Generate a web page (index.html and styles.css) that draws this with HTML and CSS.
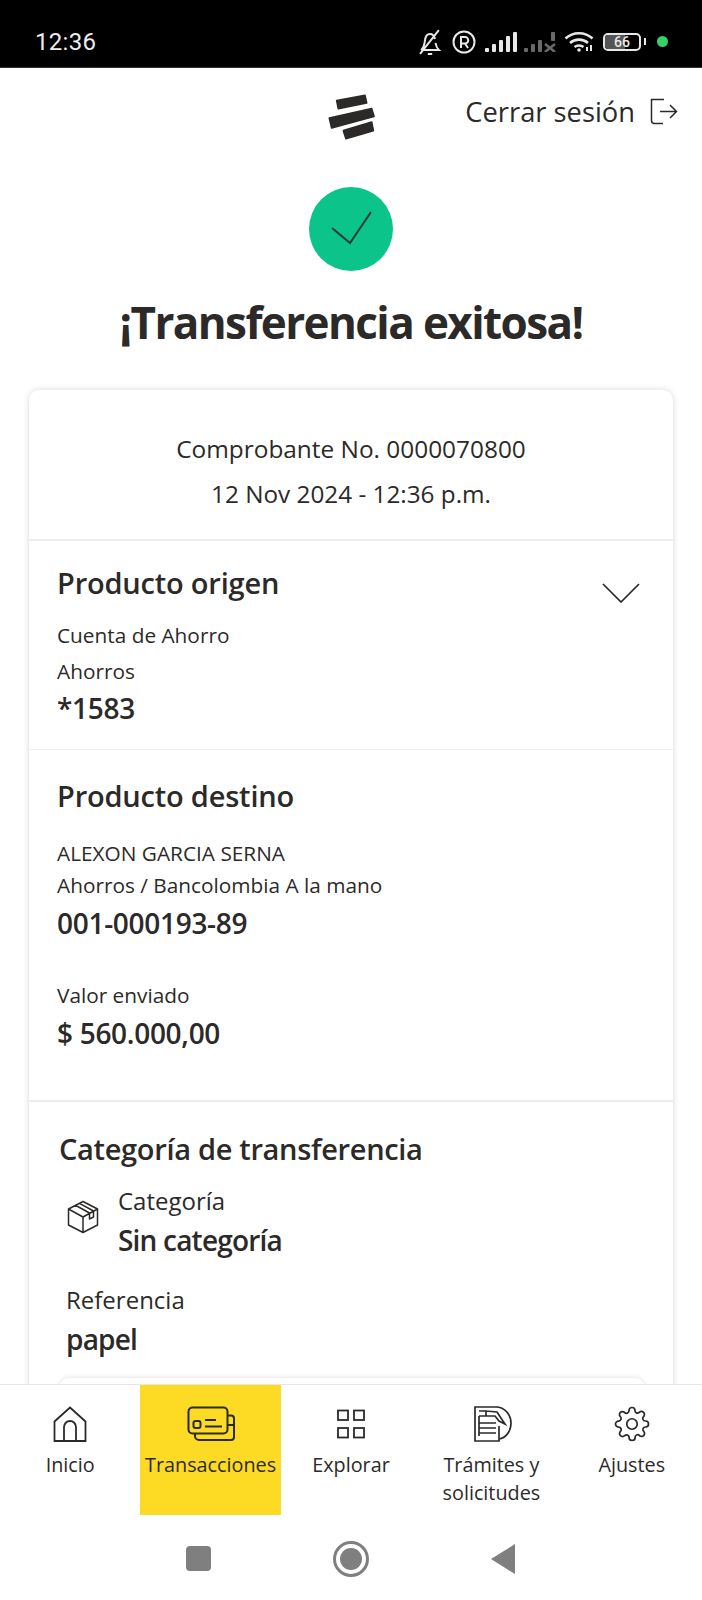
FILE: index.html
```html
<!DOCTYPE html>
<html lang="es">
<head>
<meta charset="utf-8">
<title>Transferencia exitosa</title>
<link rel="stylesheet" href="styles.css">
</head>
<body>
<div class="phone">
  <div class="statusbar">
    <span class="clock">12:36</span>
    <div class="status-icons">
      <svg class="si-bell" viewBox="2 0 20 23.500" fill="none" stroke="#e8e8e8" stroke-width="1.800"><path d="M4 19c2.200-2 3-4.500 3.500-9 .4-3.500 2.300-5.500 4.500-5.500s3.800 1.500 4.500 4.500M17 12.500c.4 2.500 1.200 4.800 3 6.500H4M10 22.500h4M3 22.500 20 1"/></svg>
      <svg class="si-r" viewBox="0 0 24 24" fill="none" stroke="#e8e8e8" stroke-width="2"><circle cx="12" cy="12" r="10.500"/><path d="M9 18V7h4a3 3 0 0 1 0 6.500H9M13 13.500l3 4.500"/></svg>
      <svg class="si-sig" viewBox="0 0 32 20" fill="#e8e8e8"><rect x="0" y="16" width="4" height="4" rx="1"/><rect x="7" y="12" width="4" height="8" rx="1"/><rect x="14" y="8" width="4" height="12" rx="1"/><rect x="21" y="4" width="4" height="16" rx="1"/><rect x="28" y="0" width="4" height="20" rx="1"/></svg>
      <svg class="si-sig" viewBox="0 0 32 20" fill="#6a6a6a"><rect x="0" y="16" width="4" height="4" rx="1"/><rect x="7" y="12" width="4" height="8" rx="1"/><rect x="14" y="8" width="4" height="12" rx="1"/><rect x="27" y="0" width="4" height="9" rx="1"/><path d="M21 12l10 8M31 12l-10 8" stroke="#6a6a6a" stroke-width="2.500"/></svg>
      <svg class="si-wifi" viewBox="1 0 28 21" fill="none" stroke="#e8e8e8" stroke-width="2.600"><path d="M1.500 7.500C9 .5 21 .5 28.500 7.500M6 12c5-4.500 13-4.500 18 0M10.500 16c2.500-2 6.500-2 9 0"/><circle cx="15" cy="19" r="1.800" fill="#e8e8e8" stroke="none"/><path d="M23 20v-4M27 20v-6" stroke-width="2"/></svg>
      <div class="battery"><span class="battery-body"><span class="battery-fill"></span><span class="battery-text">66</span></span><span class="battery-nub"></span></div>
      <span class="dot"></span>
    </div>
  </div>

  <div class="scroll">
    <header class="topbar">
      <span></span>
      <svg class="logo" viewBox="0 0 195 180" fill="#2c2a29" stroke="#2c2a29" stroke-width="5" stroke-linejoin="round"><polygon points="50,38 135,22 140,45 55,62"/><polygon points="28,90 155,62 162,85 35,120"/><polygon points="70,128 155,102 160,128 78,152"/></svg>
      <a class="logout"><span>Cerrar sesión</span>
        <svg class="logout-icon" viewBox="0 0 28 28" fill="none" stroke="#2c2a29" stroke-width="1.500"><path d="M14 1.500H1.500v21a3 3 0 0 0 3 3H13M10 13.500h16.500M20 7l6.500 6.500L20 20"/></svg>
      </a>
    </header>

    <div class="success">
      <div class="check"><svg viewBox="0 0 84 84" fill="none" stroke="#1f3a34" stroke-width="2"><path d="M23 41 41 56 62 25"/></svg></div>
      <h1 class="title">¡Transferencia exitosa!</h1>
    </div>

    <main class="card">
      <section class="receipt">
        <p class="receipt-no">Comprobante No. 0000070800</p>
        <p class="receipt-date">12 Nov 2024 - 12:36 p.m.</p>
      </section>

      <section class="block origin">
        <div class="block-head">
          <h2 class="block-title">Producto origen</h2>
          <svg class="chevron" viewBox="0 0 38 20" fill="none" stroke="#2c2a29" stroke-width="1.700"><path d="M1 1 19 19 37 1"/></svg>
        </div>
        <p class="line l-cuenta">Cuenta de Ahorro</p>
        <p class="line l-ahorros">Ahorros</p>
        <p class="amount l-num">*1583</p>
      </section>

      <section class="block dest">
        <h2 class="block-title">Producto destino</h2>
        <p class="line l-name">ALEXON GARCIA SERNA</p>
        <p class="line l-type">Ahorros / Bancolombia A la mano</p>
        <p class="amount l-acc">001-000193-89</p>
        <p class="line l-valor">Valor enviado</p>
        <p class="amount l-money">$ 560.000,00</p>
      </section>

      <section class="block category">
        <h2 class="block-title">Categoría de transferencia</h2>
        <div class="cat-row">
          <svg class="box-icon" viewBox="0 0 32 34" fill="none" stroke="#2c2a29" stroke-width="1.500" stroke-linejoin="round"><path d="M16 1.500 30.500 9v16L16 32.500 1.500 25V9zM1.500 9 16 17l14.500-8M16 17v15.500M8 5l14.500 8v6l4-2v-6L12 3.200"/></svg>
          <div>
            <p class="cat-label">Categoría</p>
            <p class="cat-value">Sin categoría</p>
          </div>
        </div>
        <p class="cat-label ref-label">Referencia</p>
        <p class="cat-value ref-value">papel</p>
        <div class="inner-card"></div>
      </section>
    </main>
  </div>

  <nav class="tabs">
    <a class="tab">
      <svg class="tab-icon" viewBox="0 0 36 36" fill="none" stroke="#2c2a29" stroke-width="1.800"><path d="M2.500 35V15.500L18 1.500l15.500 14V35zM12 35V21a6 6 0 0 1 12 0v14"/></svg>
      <span>Inicio</span>
    </a>
    <a class="tab active">
      <svg class="tab-icon wide" viewBox="0 0 48 36" fill="none" stroke="#2c2a29" stroke-width="2"><rect x="1.500" y="1.500" width="39" height="26" rx="4"/><path d="M40.500 9.500H44a3 3 0 0 1 3 3V31a3 3 0 0 1-3 3H12a4 4 0 0 1-4-4v-2.500M40.500 19H47"/><rect x="6.500" y="15" width="7" height="7" rx="2"/><path d="M18 14h11M18 20.500h17"/></svg>
      <span>Transacciones</span>
    </a>
    <a class="tab">
      <svg class="tab-icon" viewBox="0 0 36 36" fill="none" stroke="#2c2a29" stroke-width="1.800"><rect x="5" y="4.500" width="10" height="9.500"/><rect x="21" y="4.500" width="10" height="9.500"/><rect x="5" y="22" width="10" height="9.500"/><rect x="21" y="22" width="10" height="9.500"/></svg>
      <span>Explorar</span>
    </a>
    <a class="tab">
      <svg class="tab-icon wide2" viewBox="0 0 38 36" fill="none" stroke="#2c2a29" stroke-width="1.700"><path d="M24 1H1v34h24V20M16 1h6c9 0 15 8 15 16s-5 15-12 16"/><path d="M5 5h7v5M12 5l11 1 8 12-6-3-4-5H5v0M5 10v20M5 17h17M5 22h17M5 27h17"/></svg>
      <span>Trámites y solicitudes</span>
    </a>
    <a class="tab">
      <svg class="tab-icon" viewBox="0 0 24 24" fill="none" stroke="#2c2a29" stroke-width="1.150"><circle cx="12" cy="12" r="3.500"/><path d="M19.400 15a1.650 1.650 0 0 0 .33 1.820l.06.06a2 2 0 0 1 0 2.830 2 2 0 0 1-2.830 0l-.06-.06a1.650 1.650 0 0 0-1.820-.33 1.650 1.650 0 0 0-1 1.510V21a2 2 0 0 1-2 2 2 2 0 0 1-2-2v-.09A1.650 1.650 0 0 0 9 19.400a1.650 1.650 0 0 0-1.820.33l-.06.06a2 2 0 0 1-2.830 0 2 2 0 0 1 0-2.830l.06-.06a1.650 1.650 0 0 0 .33-1.820 1.650 1.650 0 0 0-1.510-1H3a2 2 0 0 1-2-2 2 2 0 0 1 2-2h.09A1.650 1.650 0 0 0 4.600 9a1.650 1.650 0 0 0-.33-1.820l-.06-.06a2 2 0 0 1 0-2.830 2 2 0 0 1 2.830 0l.06.06a1.650 1.650 0 0 0 1.820.33H9a1.650 1.650 0 0 0 1-1.510V3a2 2 0 0 1 2-2 2 2 0 0 1 2 2v.09a1.650 1.650 0 0 0 1 1.510 1.650 1.650 0 0 0 1.820-.33l.06-.06a2 2 0 0 1 2.830 0 2 2 0 0 1 0 2.830l-.06.06a1.650 1.650 0 0 0-.33 1.820V9a1.650 1.650 0 0 0 1.510 1H21a2 2 0 0 1 2 2 2 2 0 0 1-2 2h-.09a1.650 1.650 0 0 0-1.510 1z"/></svg>
      <span>Ajustes</span>
    </a>
  </nav>

  <div class="softkeys">
    <span class="key-square"></span>
    <span class="key-circle"><span class="key-circle-in"></span></span>
    <span class="key-back"></span>
  </div>
</div>
</body>
</html>
```
FILE: styles.css
```css
* { box-sizing: border-box; }
html, body { margin: 0; padding: 0; background: #fff; }
body { font-family: "Open Sans", "Noto Sans", sans-serif; color: #2c2a29; }
p, h1, h2 { margin: 0; }

.phone { width: 702px; height: 1600px; display: flex; flex-direction: column; overflow: hidden; background: #fff; }

/* status bar */
.statusbar { flex: 0 0 68px; background: #000; display: flex; align-items: center; justify-content: space-between; padding: 16px 34px 0 35px; border-bottom: 1px solid #333; }
.clock { font-family: Roboto, sans-serif; font-size: 24px; font-weight: 400; color: #ececec; letter-spacing: .3px; }
.status-icons { display: flex; align-items: center; }
.si-bell { width: 26px; height: 26px; margin-right: 9px; }
.si-r { width: 24px; height: 24px; margin-right: 9px; }
.si-sig { width: 32px; height: 20px; margin-right: 7px; }
.si-wifi { width: 30px; height: 21px; margin-left: 1.500px; margin-right: 9px; }
.battery { display: flex; align-items: center; margin-right: 11px; }
.battery-body { position: relative; width: 38px; height: 18px; border: 2px solid #e8e8e8; border-radius: 5px; display: block; overflow: hidden; }
.battery-fill { position: absolute; left: 0; top: 0; bottom: 0; width: 60%; background: #555; }
.battery-text { position: relative; display: block; text-align: center; font-family: Roboto, sans-serif; font-size: 14px; line-height: 14px; font-weight: 500; color: #e8e8e8; }
.battery-nub { width: 2px; height: 7px; background: #e8e8e8; margin-left: 3px; }
.dot { width: 11px; height: 11px; border-radius: 50%; background: #34d268; }

/* scrolling content */
.scroll { flex: 1 1 0; min-height: 0; overflow: hidden; }
.topbar { height: 87px; display: grid; grid-template-columns: 1fr auto 1fr; align-items: center; padding: 0 24px; }
.logo { width: 65px; height: 60px; margin: 12px 0 0 3px; }
.logout { justify-self: end; display: flex; align-items: center; gap: 15px; font-size: 27.300px; color: #2c2a29; white-space: nowrap; }
.logout-icon { width: 28px; height: 28px; }

.success { display: flex; flex-direction: column; align-items: center; padding-top: 32px; }
.check { width: 84px; height: 84px; border-radius: 50%; background: #0bc48a; }
.check svg { display: block; width: 84px; height: 84px; }
.title { margin-top: 21px; font-size: 44px; line-height: 60px; font-weight: 700; letter-spacing: -1.600px; }

/* card */
.card { margin: 38px 29px 0; border-radius: 10px; box-shadow: 0 0 6px rgba(0,0,0,.16); background: #fff; }
.receipt { height: 151px; padding-top: 42px; text-align: center; border-bottom: 2px solid #ececec; }
.receipt-no { font-size: 24.400px; line-height: 34px; font-weight: 400; }
.receipt-date { margin-top: 11px; font-size: 24.300px; line-height: 34px; }

.block { padding-left: 28px; padding-right: 33px; }
.block-title { font-size: 29px; line-height: 38px; font-weight: 600; letter-spacing: -.2px; }
.category .block-title { letter-spacing: -.32px; }
.line { font-size: 20.800px; line-height: 30px; }
.amount { font-size: 28px; line-height: 38px; font-weight: 600; letter-spacing: -.3px; }

.origin { height: 209px; padding-top: 23px; border-bottom: 1px solid #eee; }
.block-head { display: flex; justify-content: space-between; align-items: flex-start; }
.chevron { width: 38px; height: 20px; margin-top: 19px; }
.l-cuenta { margin-top: 17px; }
.l-ahorros { margin-top: 6px; }
.l-num { margin-top: 3px; }

.dest { height: 352px; padding-top: 27px; border-bottom: 2px solid #ececec; }
.l-name { margin-top: 23px; }
.l-type { margin-top: 2px; }
.l-acc { margin-top: 4px; }
.l-valor { margin-top: 38px; }
.l-money { margin-top: 4px; }

.category { padding: 28px 28px 20px 30px; }
.cat-row { display: flex; align-items: flex-start; margin-top: 16px; }
.box-icon { width: 32px; height: 34px; margin: 16px 19px 0 8px; flex: none; }
.cat-label { font-size: 24px; line-height: 34px; }
.cat-value { font-size: 28px; line-height: 38px; font-weight: 600; letter-spacing: -.8px; margin-top: 3px; }
.ref-label { margin: 24px 0 0 7px; }
.ref-value { margin: 3px 0 0 7px; }
.inner-card { height: 100px; margin: 20px 0 0; border-radius: 10px; box-shadow: 0 0 5px rgba(0,0,0,.14); }

/* bottom tabs */
.tabs { flex: 0 0 133px; display: grid; grid-template-columns: repeat(5, 1fr); background: #fff; border-top: 1px solid #e6e6e6; align-items: start; height: 133px; }
.tab { display: flex; flex-direction: column; align-items: center; padding-top: 21px; height: 130px; font-size: 19.800px; line-height: 28px; text-align: center; color: #2c2a29; }
.tab span { margin-top: 9px; }
.tab-icon { display: block; width: 36px; height: 36px; flex: none; }
.tab-icon.wide { width: 48px; }
.tab-icon.wide2 { width: 38px; margin-left: 3px; }
.active { background: #fdda24; }

/* navigation keys */
.softkeys { flex: 0 0 83px; display: flex; align-items: center; }
.key-square { width: 25px; height: 25px; border-radius: 4px; background: #7f7f7f; margin-left: 186px; }
.key-circle { width: 36px; height: 36px; border-radius: 50%; border: 3px solid #7f7f7f; margin-left: 122px; display: flex; align-items: center; justify-content: center; }
.key-circle-in { width: 22px; height: 22px; border-radius: 50%; background: #7f7f7f; }
.key-back { width: 0; height: 0; border-style: solid; border-width: 15px 24px 15px 0; border-color: transparent #7f7f7f transparent transparent; margin-left: 122px; }
```
